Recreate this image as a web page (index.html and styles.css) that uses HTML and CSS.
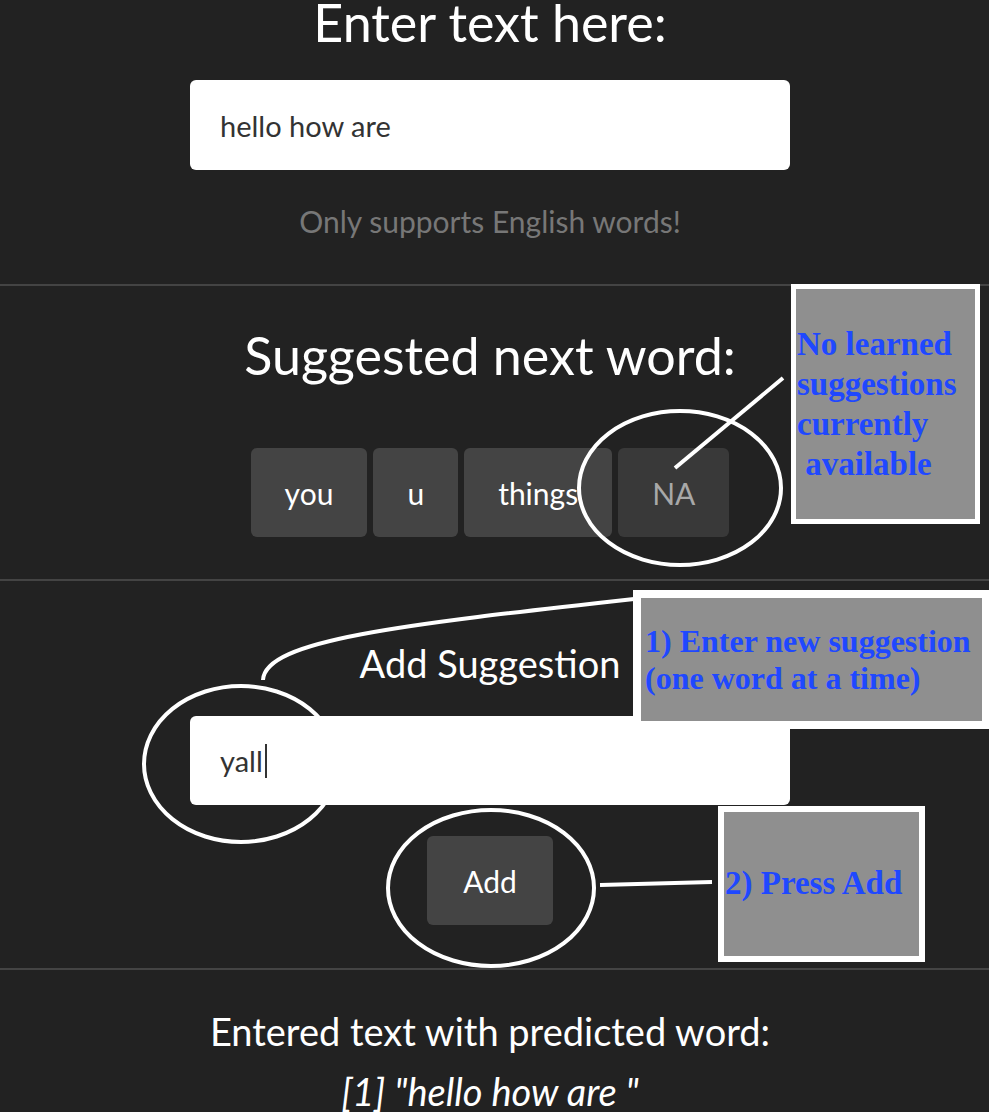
FILE: index.html
```html
<!DOCTYPE html>
<html lang="en">
<head>
<meta charset="utf-8">
<title>Next word prediction</title>
<link rel="stylesheet" href="styles.css">
</head>
<body>
<div class="page">
  <section class="sec sec-enter">
    <h1 class="title">Enter text here:</h1>
    <div class="field"><span class="field-text">hello how are</span></div>
    <p class="note">Only supports English words!</p>
  </section>

  <section class="sec sec-suggest">
    <h2 class="title">Suggested next word:</h2>
    <div class="btn-row">
      <button class="btn">you</button>
      <button class="btn">u</button>
      <button class="btn">things</button>
      <button class="btn btn-na">NA</button>
    </div>
  </section>

  <section class="sec sec-add">
    <h3 class="sub">Add Suggestion</h3>
    <div class="field field-add"><span class="field-text">yall</span><span class="caret"></span></div>
    <div class="btn-row btn-row-add">
      <button class="btn btn-add">Add</button>
    </div>
  </section>

  <section class="sec sec-result">
    <p class="result-label">Entered text with predicted word:</p>
    <p class="result-value">[1] "hello how are "</p>
  </section>

  <svg class="marks-under" width="989" height="1112" viewBox="0 0 989 1112">
    <ellipse cx="241" cy="764" rx="97" ry="78" fill="none" stroke="#fff" stroke-width="4"/>
  </svg>

  <svg class="marks" width="989" height="1112" viewBox="0 0 989 1112">
    <ellipse cx="680" cy="488" rx="101" ry="77" fill="none" stroke="#fff" stroke-width="4"/>
    <line x1="675" y1="468" x2="783" y2="378" stroke="#fff" stroke-width="4"/>
    <path d="M634 599 C 400 625, 265 640, 263 680" fill="none" stroke="#fff" stroke-width="4"/>
    <ellipse cx="491" cy="888" rx="103" ry="78" fill="none" stroke="#fff" stroke-width="4"/>
    <line x1="600" y1="885" x2="712" y2="882" stroke="#fff" stroke-width="4"/>
  </svg>

  <div class="callout callout-1">No learned<br>suggestions<br>currently<br>&nbsp;available</div>
  <div class="callout callout-2">1) Enter new suggestion<br>(one word at a time)</div>
  <div class="callout callout-3">2) Press Add</div>
</div>
</body>
</html>
```

FILE: styles.css
```css
html, body {
  margin: 0;
  padding: 0;
  background: #222222;
}

body {
  font-family: Lato, "Open Sans", "Liberation Sans", sans-serif;
  color: #ffffff;
  width: 989px;
  height: 1112px;
  overflow: hidden;
}

.page {
  position: relative;
  width: 989px;
  height: 1112px;
}

.sec {
  padding-right: 9px;
  text-align: center;
  border-bottom: 2px solid #444444;
  box-sizing: border-box;
}

.title {
  margin: 0;
  font-size: 52px;
  font-weight: 400;
  line-height: 60px;
}

.sec-enter {
  height: 286px;
}

.sec-enter .title {
  line-height: 44px;
}

.field {
  position: relative;
  z-index: 1;
  box-sizing: border-box;
  width: 600px;
  height: 90px;
  margin: 36px auto 0;
  padding-left: 30px;
  background: #ffffff;
  border-radius: 6px;
  display: flex;
  align-items: center;
  text-align: left;
  font-size: 29px;
  color: #333333;
}

.note {
  margin: 34px 0 0;
  font-size: 30px;
  line-height: 34px;
  color: #777777;
}

.sec-suggest {
  height: 295px;
  padding-top: 39px;
}

.btn-row {
  display: flex;
  justify-content: center;
  gap: 6px;
  margin-top: 63px;
}

.btn {
  height: 89px;
  padding: 0 34px;
  border: none;
  border-radius: 6px;
  background: #444444;
  color: #ffffff;
  font-family: inherit;
  font-size: 30px;
}

.btn-na {
  background: #393939;
  color: #a8a8a8;
}

.sec-add {
  height: 389px;
  padding-top: 60px;
}

.sub {
  margin: 0;
  font-size: 38px;
  font-weight: 400;
  line-height: 44px;
}

.field-add {
  margin-top: 31px;
  height: 89px;
}

.caret {
  display: inline-block;
  width: 2px;
  height: 34px;
  margin-left: 2px;
  background: #333333;
}

.btn-row-add {
  margin-top: 31px;
}

.btn-add {
  padding: 0 36px;
}

.sec-result {
  border-bottom: none;
  padding-top: 31px;
}

.result-label,
.result-value {
  margin: 0;
  font-size: 38px;
  line-height: 60px;
}

.result-value {
  font-style: italic;
}

.marks-under {
  position: absolute;
  left: 0;
  top: 0;
  z-index: 0;
  pointer-events: none;
}

.marks {
  position: absolute;
  left: 0;
  top: 0;
  z-index: 2;
  pointer-events: none;
}

.callout {
  position: absolute;
  z-index: 3;
  box-sizing: border-box;
  background: #8f8f8f;
  border: 5px solid #ffffff;
  color: #1f48ff;
  font-family: "Liberation Serif", "Times New Roman", serif;
  font-weight: 700;
  font-size: 32px;
  text-align: left;
  white-space: nowrap;
}

.callout-1 {
  left: 791px;
  top: 284px;
  width: 189px;
  height: 240px;
  padding: 35px 0 0 1px;
  font-size: 33px;
  line-height: 40px;
}

.callout-2 {
  left: 633px;
  top: 590px;
  width: 356px;
  height: 139px;
  border-width: 8px;
  border-right-width: 7px;
  padding: 25px 0 0 4px;
  line-height: normal;
}

.callout-3 {
  left: 718px;
  top: 806px;
  width: 207px;
  height: 156px;
  border-width: 6px;
  padding: 53px 0 0 1px;
  font-size: 33px;
  line-height: normal;
}
```
